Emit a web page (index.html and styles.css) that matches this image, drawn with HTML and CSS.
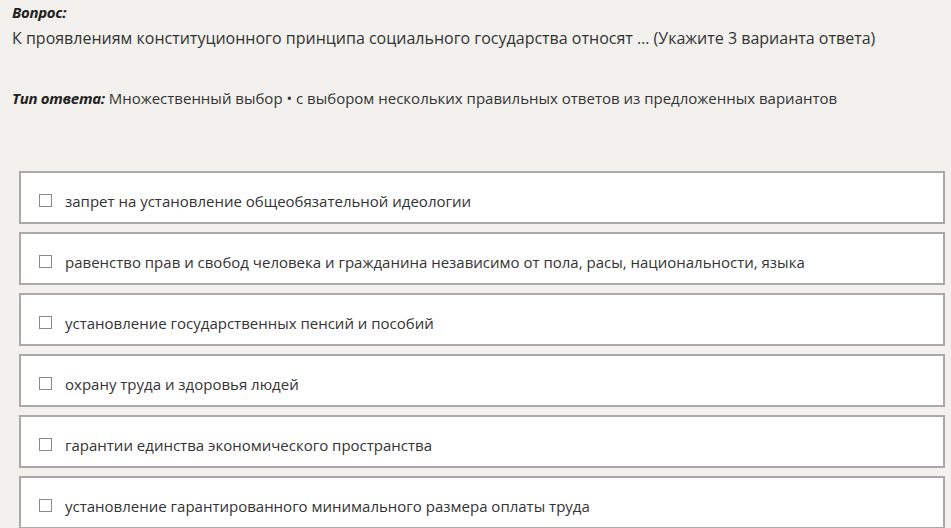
FILE: index.html
```html
<!DOCTYPE html>
<html>
  <head>
    <title>Вопрос</title>
    <link rel="stylesheet" href="styles.css">
  </head>
  <body>
    <div class="question">
      <div class="label">Вопрос:</div>
      <div class="text">
        К проявлениям конституционного принципа социального государства относят … (Укажите 3 варианта ответа)
      </div>
    </div>
    <div class="answer-type">
      <span class="label">Тип ответа:</span> Множественный выбор • с выбором нескольких правильных ответов из предложенных вариантов
    </div>
    <ul class="options">
      <li class="option"><span class="box"></span>запрет на установление общеобязательной идеологии</li>
      <li class="option"><span class="box"></span>равенство прав и свобод человека и гражданина независимо от пола, расы, национальности, языка</li>
      <li class="option"><span class="box"></span>установление государственных пенсий и пособий</li>
      <li class="option"><span class="box"></span>охрану труда и здоровья людей</li>
      <li class="option"><span class="box"></span>гарантии единства экономического пространства</li>
      <li class="option"><span class="box"></span>установление гарантированного минимального размера оплаты труда</li>
    </ul>
  </body>
</html>
```

FILE: styles.css
```css
:root {
  --bg: #f2f1ee;
  --surface: #fff;
  --border: #a9a9a9;
  --text: #333;
}

html,
body {
  margin: 0;
  padding: 0;
  background: var(--bg);
  color: var(--text);
  font-family: "Open Sans", "Noto Sans", Arial, sans-serif;
}

body {
  padding: 2px 6px 0 12px;
}

.label {
  font-weight: 700;
  font-style: italic;
  font-size: 15px;
  letter-spacing: -0.3px;
  color: #222;
}

.question .label {
  line-height: 20px;
}

.question .text {
  margin-top: 3px;
  font-size: 16px;
  line-height: 26px;
}

.answer-type {
  margin-top: 37px;
  font-size: 15px;
  line-height: 20px;
}

.options {
  list-style: none;
  margin: 63px 0 0 7px;
  padding: 0;
  display: flex;
  flex-direction: column;
  gap: 8px;
}

.option {
  display: flex;
  align-items: center;
  height: 43px;
  padding: 6px 18px 0;
  background: var(--surface);
  border: 2px solid var(--border);
  font-size: 15px;
}

.box {
  width: 11px;
  height: 11px;
  border: 1px solid #8a8a8a;
  margin-right: 13px;
  flex-shrink: 0;
}
```
